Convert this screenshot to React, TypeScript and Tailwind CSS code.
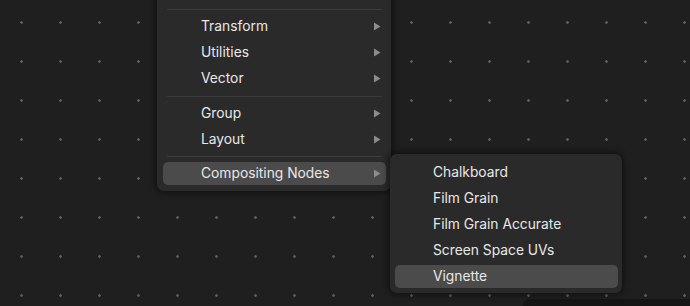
import type { ReactNode } from 'react';

function Arrow() {
  return (
    <svg width="8" height="9" viewBox="0 0 8 9" className="shrink-0">
      <path d="M1 0.5 L7.5 4.5 L1 8.5 Z" fill="#8c8c8c" />
    </svg>
  );
}

function Item({ label, sub, active }: { label: string; sub?: boolean; active?: boolean }) {
  return (
    <div
      className={`flex h-[23px] items-center justify-between rounded-[5px] pl-[38px] pr-[5px] ${
        active ? 'bg-[#4b4b4b]' : ''
      }`}
    >
      <span className="text-[13.8px] leading-none text-[#e8e8e8]">{label}</span>
      {sub && <Arrow />}
    </div>
  );
}

function Sep({ tight }: { tight?: boolean }) {
  return <div className={`mx-[4px] h-px bg-[#3b3b3b] ${tight ? 'my-[2px]' : 'my-[2.5px]'}`} />;
}

function Panel({ children, className }: { children: ReactNode; className: string }) {
  return (
    <div
      className={`absolute flex flex-col gap-[3px] rounded-[7px] bg-[#2a2a2a] shadow-[0_0_6px_2px_rgba(0,0,0,0.45)] ${className}`}
    >
      {children}
    </div>
  );
}

export default function App() {
  return (
    <div
      className="relative h-[306px] w-[690px] overflow-hidden bg-[#1f1f1f] bg-[radial-gradient(circle,#5c5c5c_1px,transparent_1.6px)] bg-[size:39px_39px] bg-[position:2px_3px]"
      style={{ fontFamily: 'Inter, "Noto Sans", sans-serif' }}
    >
      <div className="absolute left-[523px] top-[299px] h-[20px] w-[180px] rounded-tl-[6px] bg-[#151515]" />

      <Panel className="left-[157px] top-[-28px] w-[234px] px-[6px] pb-[6px] pr-[5px] pt-[8px]">
        <div className="h-[23px]" />
        <Sep />
        <Item label="Transform" sub />
        <Item label="Utilities" sub />
        <Item label="Vector" sub />
        <Sep />
        <Item label="Group" sub />
        <Item label="Layout" sub />
        <Sep tight />
        <Item label="Compositing Nodes" sub active />
      </Panel>

      <Panel className="left-[390px] top-[154px] w-[232px] pb-[5px] pl-[5px] pr-[4px] pt-[7px]">
        <Item label="Chalkboard" />
        <Item label="Film Grain" />
        <Item label="Film Grain Accurate" />
        <Item label="Screen Space UVs" />
        <Item label="Vignette" active />
      </Panel>
    </div>
  );
}
